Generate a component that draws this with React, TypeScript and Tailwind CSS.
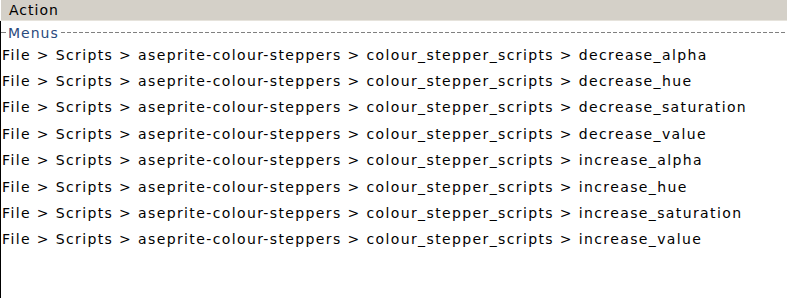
import React from "react";

const items = [
  "decrease_alpha",
  "decrease_hue",
  "decrease_saturation",
  "decrease_value",
  "increase_alpha",
  "increase_hue",
  "increase_saturation",
  "increase_value",
];

export default function App() {
  return (
    <div
      className="w-[787px] h-[298px] bg-white overflow-hidden flex flex-col"
      style={{ fontFamily: '"DejaVu Sans", sans-serif' }}
    >
      <div className="h-[21px] bg-[#d4d0c8] border-l border-l-[#ffffff] border-b border-b-[#e6e3dc] flex items-center pl-[8px] text-[14px] tracking-[1px] text-black shrink-0">
        Action
      </div>
      <div className="flex-1 border-l border-l-black flex flex-col">
        <div className="h-[23px] flex items-center">
          <div className="w-[5px] h-[1px] bg-[#808080]" />
          <span className="text-[14px] tracking-[1px] text-[#2b4a7d] px-[2px] leading-none">Menus</span>
          <div className="flex-1 h-[1px] bg-[repeating-linear-gradient(90deg,#808080_0px,#808080_4px,transparent_4px,transparent_6px)] mr-[2px]" />
        </div>
        <div className="flex flex-col -mt-[2px]">
          {items.map((it) => (
            <div key={it} className="h-[26.4px] flex items-center pl-[1px] text-[14px] tracking-[1.38px] text-black whitespace-pre">
              {"File > Scripts > aseprite-colour-steppers > colour_stepper_scripts > " + it}
            </div>
          ))}
        </div>
      </div>
    </div>
  );
}
